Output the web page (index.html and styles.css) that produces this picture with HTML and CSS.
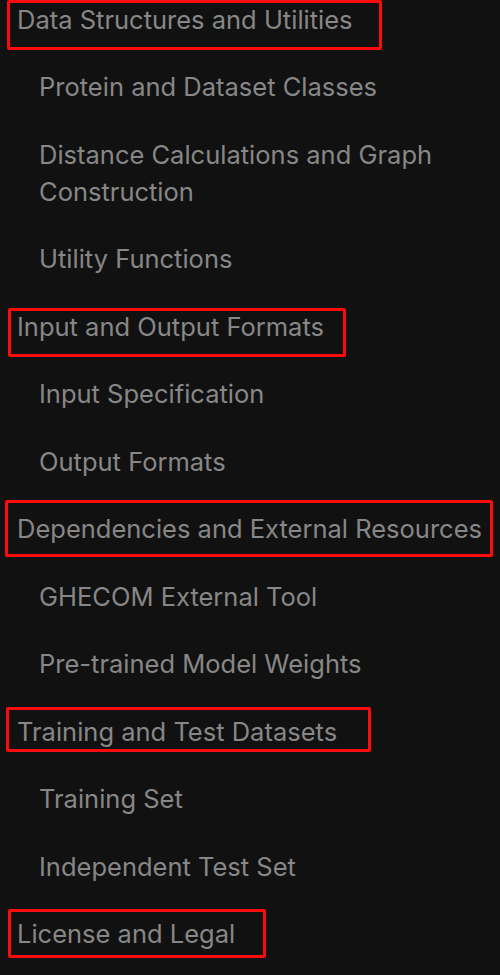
FILE: index.html
```html
<!DOCTYPE html>
<html lang="en">
<head>
<meta charset="utf-8">
<title>Contents</title>
<link rel="stylesheet" href="styles.css">
</head>
<body>
<nav class="toc">
  <ul class="toc-list">
    <li class="toc-head">Data Structures and Utilities<span class="mark" style="left:7px;top:-19px;width:375px;height:50px"></span></li>
    <li class="toc-sub">Protein and Dataset Classes</li>
    <li class="toc-sub">Distance Calculations and Graph Construction</li>
    <li class="toc-sub">Utility Functions</li>
    <li class="toc-head">Input and Output Formats<span class="mark" style="left:8px;top:-18px;width:338px;height:49px"></span></li>
    <li class="toc-sub">Input Specification</li>
    <li class="toc-sub">Output Formats</li>
    <li class="toc-head">Dependencies and External Resources<span class="mark" style="left:5px;top:-29px;width:488px;height:57px"></span></li>
    <li class="toc-sub">GHECOM External Tool</li>
    <li class="toc-sub">Pre-trained Model Weights</li>
    <li class="toc-head">Training and Test Datasets<span class="mark" style="left:6px;top:-24px;width:365px;height:45px"></span></li>
    <li class="toc-sub">Training Set</li>
    <li class="toc-sub">Independent Test Set</li>
    <li class="toc-head">License and Legal<span class="mark" style="left:8px;top:-25px;width:258px;height:49px"></span></li>
  </ul>
</nav>
</body>
</html>
```
FILE: styles.css
```css
html, body {
  margin: 0;
  padding: 0;
  background: #111111;
}
body {
  width: 500px;
  height: 975px;
  overflow: hidden;
  font-family: Inter, "Noto Sans", sans-serif;
  color: #878787;
}
.toc-list {
  list-style: none;
  margin: -14.5px 0 0 0;
  padding: 0 10px 0 0;
}
.toc-list li {
  font-size: 25.5px;
  line-height: 37px;
  padding: 15px 0 15.5px;
}
.toc-head {
  padding-left: 17px !important;
  position: relative;
}
.toc-sub {
  padding-left: 39px !important;
}
.mark {
  position: absolute;
  box-sizing: border-box;
  border: 3px solid #ff0a0a;
  border-radius: 2px;
  margin-top: 33.5px;
  pointer-events: none;
}
```
